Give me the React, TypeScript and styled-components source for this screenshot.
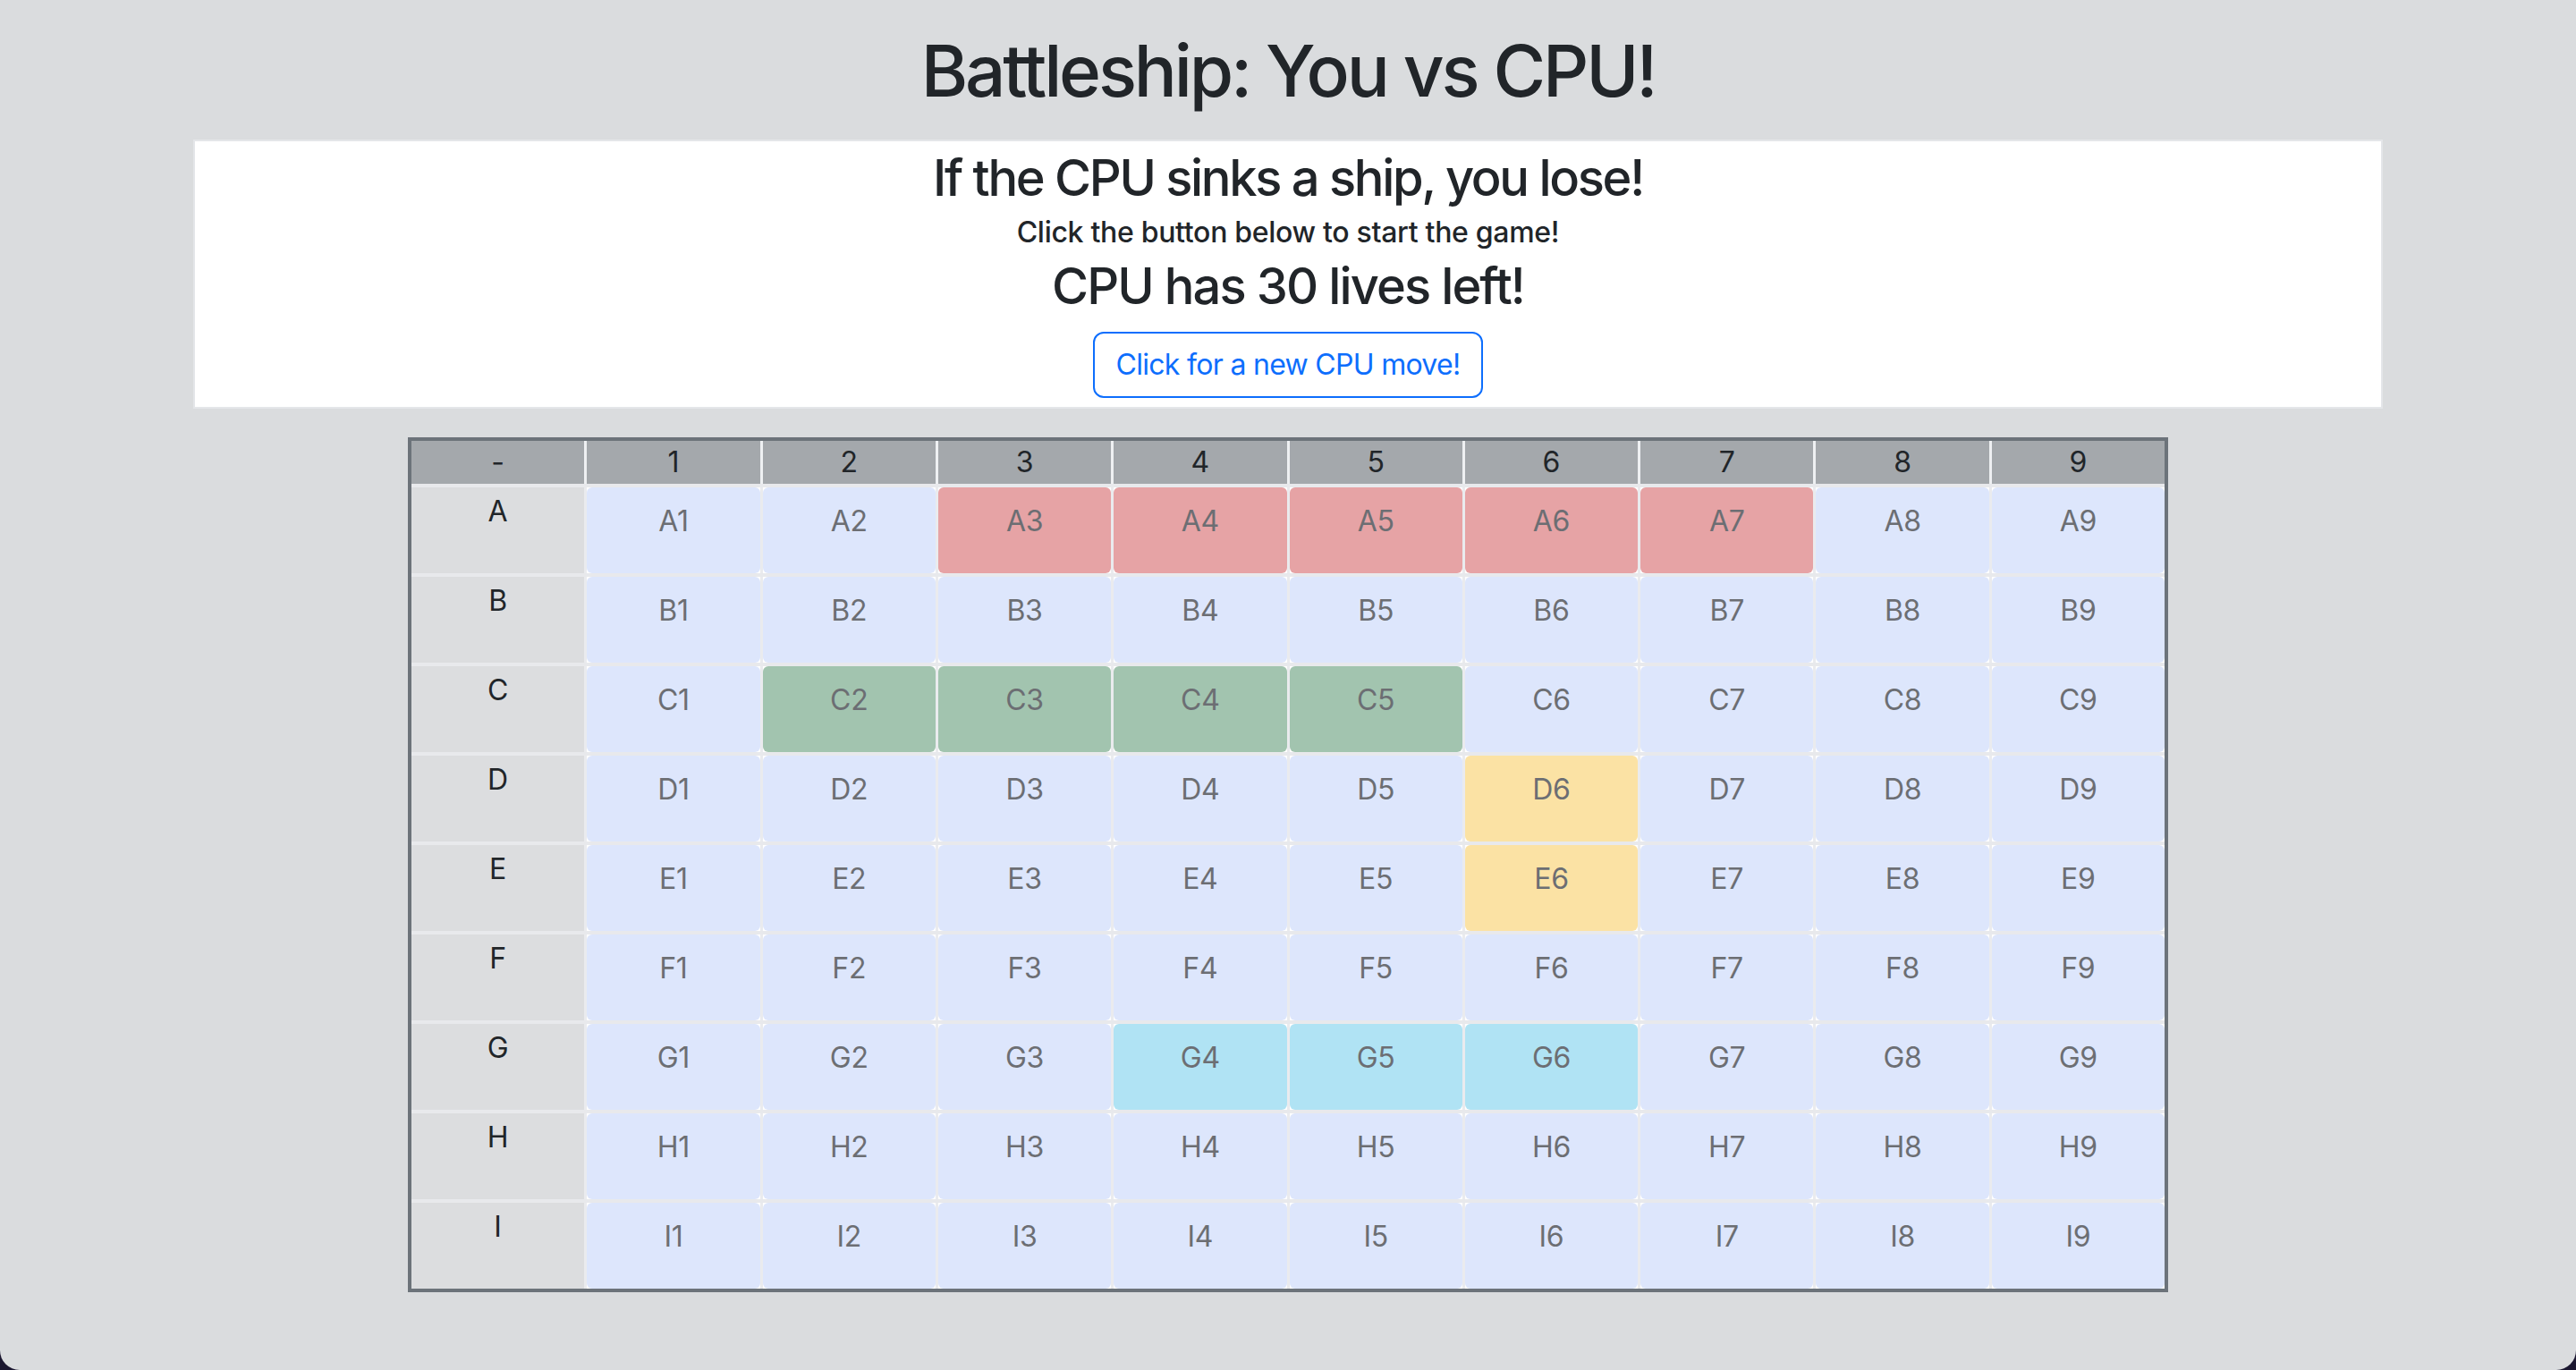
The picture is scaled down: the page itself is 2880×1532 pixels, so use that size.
import React from "react";
import styled, { createGlobalStyle } from "styled-components";

const GlobalStyle = createGlobalStyle`
  html, body {
    margin: 0;
    padding: 0;
    background: #1b1730;
  }
  body {
    font-family: Inter, "Noto Sans", "Liberation Sans", sans-serif;
    color: #212529;
  }
  * { box-sizing: border-box; }
`;

const Page = styled.div`
  min-height: 1532px;
  background: #dadcde;
  border-radius: 0 0 22px 22px;
  padding-top: 31px;
  display: flex;
  flex-direction: column;
  align-items: center;
`;

const Title = styled.h1`
  margin: 0 0 29px;
  font-size: 80px;
  line-height: 96px;
  font-weight: 500;
  letter-spacing: -3.2px;
  color: #212529;
`;

const Panel = styled.section`
  width: 2448px;
  background: #ffffff;
  border: 2px solid #e4e6e9;
  padding: 8px 0 10px;
  display: flex;
  flex-direction: column;
  align-items: center;
  text-align: center;
`;

const Heading = styled.h3<{ $gapBelow: number; $track: number }>`
  margin: 0 0 ${(p) => p.$gapBelow}px;
  font-size: 56px;
  line-height: 67px;
  font-weight: 500;
  letter-spacing: ${(p) => p.$track}px;
  color: #212529;
`;

const SubHeading = styled.h6`
  margin: 8px 0 8px;
  font-size: 32px;
  line-height: 38px;
  font-weight: 500;
  letter-spacing: -0.3px;
  color: #212529;
`;

const OutlineButton = styled.button`
  font-family: inherit;
  font-size: 32px;
  line-height: 48px;
  letter-spacing: -0.7px;
  padding: 11px 24px;
  color: #0d6efd;
  background: #ffffff;
  border: 2px solid #0d6efd;
  border-radius: 12px;
  cursor: pointer;
`;

const Board = styled.div`
  margin-top: 32px;
  width: 1968px;
  border: 4px solid #6c737a;
  background: #e8e9ec;
  display: flex;
  flex-direction: column;
  gap: 4px;
`;

const BoardRow = styled.div<{ $height: number; $lines: string }>`
  display: grid;
  grid-template-columns: repeat(10, 1fr);
  column-gap: 3px;
  height: ${(p) => p.$height}px;
  background: ${(p) => p.$lines};
`;

const HeadCell = styled.div`
  background: #a4a8ac;
  color: #212529;
  font-size: 32px;
  line-height: 48px;
  text-align: center;
`;

const RowLabel = styled.div`
  background: #dcdddf;
  color: #212529;
  font-size: 32px;
  line-height: 48px;
  padding-top: 3px;
  text-align: center;
`;

const Slot = styled.div`
  background: #ffffff;
  display: flex;
`;

type Tone = "water" | "red" | "green" | "yellow" | "cyan";

const toneColors: Record<Tone, string> = {
  water: "#dde6fc",
  red: "#e6a3a5",
  green: "#a2c4af",
  yellow: "#fbe2a4",
  cyan: "#b0e3f4",
};

const Square = styled.div<{ $tone: Tone }>`
  flex: 1;
  background: ${(p) => toneColors[p.$tone]};
  border-radius: 6px;
  color: #6c6e73;
  font-size: 32px;
  line-height: 48px;
  letter-spacing: -0.3px;
  padding-top: 14px;
  text-align: center;
`;

const rows = ["A", "B", "C", "D", "E", "F", "G", "H", "I"];
const cols = [1, 2, 3, 4, 5, 6, 7, 8, 9];

const ships: Record<string, Tone> = {
  A3: "red",
  A4: "red",
  A5: "red",
  A6: "red",
  A7: "red",
  C2: "green",
  C3: "green",
  C4: "green",
  C5: "green",
  D6: "yellow",
  E6: "yellow",
  G4: "cyan",
  G5: "cyan",
  G6: "cyan",
};

export default function App() {
  return (
    <>
      <GlobalStyle />
      <Page>
        <Title>Battleship: You vs CPU!</Title>
        <Panel>
          <Heading $gapBelow={0} $track={-2.3}>
            If the CPU sinks a ship, you lose!
          </Heading>
          <SubHeading>Click the button below to start the game!</SubHeading>
          <Heading $gapBelow={17} $track={-1.9}>
            CPU has 30 lives left!
          </Heading>
          <OutlineButton type="button">Click for a new CPU move!</OutlineButton>
        </Panel>
        <Board>
          <BoardRow $height={48} $lines="#eef0f2">
            <HeadCell>-</HeadCell>
            {cols.map((c) => (
              <HeadCell key={c}>{c}</HeadCell>
            ))}
          </BoardRow>
          {rows.map((r) => (
            <BoardRow key={r} $height={96} $lines="#eaebee">
              <RowLabel>{r}</RowLabel>
              {cols.map((c) => {
                const id = `${r}${c}`;
                return (
                  <Slot key={id}>
                    <Square $tone={ships[id] ?? "water"}>{id}</Square>
                  </Slot>
                );
              })}
            </BoardRow>
          ))}
        </Board>
      </Page>
    </>
  );
}
